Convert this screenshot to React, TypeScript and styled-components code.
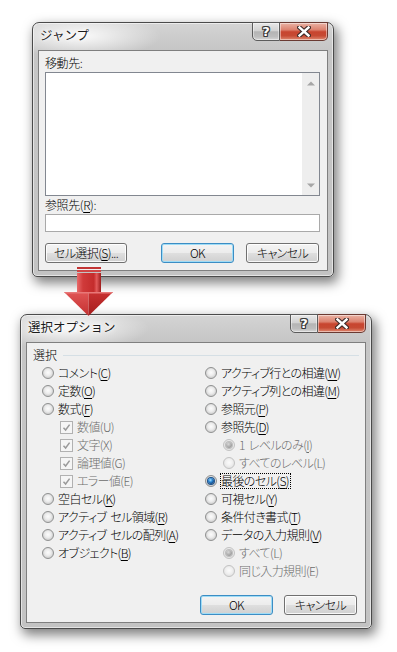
import React from "react";
import styled, { createGlobalStyle } from "styled-components";

const GlobalStyle = createGlobalStyle`
  html, body { margin: 0; padding: 0; background: #ffffff; }
  body { font-family: "Noto Sans CJK JP", "Noto Sans", sans-serif; }
  #root { width: 397px; height: 652px; }
`;

const FONT = `"Noto Sans CJK JP", "Noto Sans", sans-serif`;

const Page = styled.div`
  position: relative;
  width: 397px;
  height: 652px;
  overflow: hidden;
  display: flex;
  flex-direction: column;
  align-items: flex-start;
  padding-top: 22px;
  box-sizing: border-box;
  font-family: ${FONT};
`;

const Window = styled.div<{ $w: number; $h: number; $ml: number; $mt: number }>`
  width: ${(p) => p.$w}px;
  height: ${(p) => p.$h}px;
  margin-left: ${(p) => p.$ml}px;
  margin-top: ${(p) => p.$mt}px;
  flex-shrink: 0;
  box-sizing: border-box;
  border: 1px solid #4a4a4a;
  border-radius: 7px 7px 5px 5px;
  background:
    radial-gradient(ellipse 80px 22px at 48px 13px, rgba(255, 255, 255, 0.9), rgba(255, 255, 255, 0) 100%),
    linear-gradient(180deg, #d4d4d4 0px, #c6c6c6 26px, #c3c3c3 100%);
  box-shadow: inset 0 0 0 1px rgba(255, 255, 255, 0.55), 3px 5px 12px 1px rgba(0, 0, 0, 0.5);
  display: flex;
  flex-direction: column;
  padding: 0 5px 5px 5px;
`;

const TitleBar = styled.div`
  height: 27px;
  flex-shrink: 0;
  display: flex;
  align-items: flex-start;
`;

const Caption = styled.span`
  font-size: 12.5px;
  font-weight: 400;
  line-height: 16px;
  padding: 4px 0 0 2px;
  color: #1c1c1c;
  text-shadow: 0 0 6px #fff, 0 0 3px #fff, 0 0 1px #fff;
`;

const CaptionButtons = styled.div`
  margin-left: auto;
  margin-top: -1px;
  display: flex;
  height: 19px;
`;

const CapButton = styled.div<{ $kind: "help" | "close" }>`
  width: ${(p) => (p.$kind === "close" ? 48 : 28)}px;
  height: 19px;
  box-sizing: border-box;
  border: 1px solid ${(p) => (p.$kind === "close" ? "#6a3a32" : "#5c5c5c")};
  border-left-width: ${(p) => (p.$kind === "close" ? 0 : 1)}px;
  border-radius: ${(p) => (p.$kind === "close" ? "0 0 5px 0" : "0 0 0 5px")};
  background: ${(p) =>
    p.$kind === "close"
      ? "linear-gradient(180deg, #eab3a5 0%, #dc826f 40%, #c8452f 52%, #c64a33 75%, #e08a72 100%)"
      : "linear-gradient(180deg, #e8e8e8 0%, #d2d2d2 45%, #b4b4b4 52%, #bdbdbd 80%, #d6d6d6 100%)"};
  box-shadow: inset 0 0 0 1px rgba(255, 255, 255, 0.45);
  display: flex;
  align-items: center;
  justify-content: center;
`;

const HelpGlyph = styled.span`
  font-family: "DejaVu Sans", sans-serif;
  font-weight: bold;
  font-size: 13px;
  line-height: 13px;
  color: #fff;
  text-shadow: 1px 0 #3a3a3a, -1px 0 #3a3a3a, 0 1px #3a3a3a, 0 -1px #3a3a3a, 1px 1px #3a3a3a,
    -1px -1px #3a3a3a, 1px -1px #3a3a3a, -1px 1px #3a3a3a;
`;

const Client = styled.div`
  flex: 1;
  min-height: 0;
  border: 1px solid #7f7f7f;
  background: #f0f0f0;
  display: flex;
  flex-direction: column;
  font-size: 12px;
  font-weight: 300;
  color: #000;
`;

const FieldLabel = styled.div<{ $top: number }>`
  margin: ${(p) => p.$top}px 0 0 6px;
  line-height: 16px;
  height: 16px;
  font-size: 12px;
  letter-spacing: -0.4px;
  white-space: nowrap;
`;

const ListBox = styled.div`
  height: 124px;
  margin: 1px 7px 0 6px;
  box-sizing: border-box;
  border: 1px solid #828790;
  background: #fff;
  display: flex;
  justify-content: flex-end;
`;

const ScrollBar = styled.div`
  width: 17px;
  background: #eeeeee;
  display: flex;
  flex-direction: column;
  justify-content: space-between;
  align-items: center;
  padding: 8px 0 7px;
  box-sizing: border-box;
`;

const TextBox = styled.div`
  height: 18px;
  margin: 1px 7px 0 6px;
  box-sizing: border-box;
  border: 1px solid #a9a9a9;
  background: #fff;
`;

const ButtonRow = styled.div<{ $top: number; $spread?: boolean }>`
  margin-top: ${(p) => p.$top}px;
  display: flex;
  align-items: center;
  justify-content: ${(p) => (p.$spread ? "space-between" : "flex-end")};
  gap: 11px;
  padding: 0 8px 0 6px;
`;

const ButtonPair = styled.div`
  display: flex;
  gap: 12px;
`;

const PushButton = styled.div<{ $w: number; $default?: boolean }>`
  width: ${(p) => p.$w}px;
  height: 20px;
  box-sizing: border-box;
  border: 1px solid ${(p) => (p.$default ? "#3c8dc4" : "#707070")};
  border-radius: 3px;
  background: linear-gradient(180deg, #f4f4f4 0%, #ececec 48%, #dedede 52%, #d0d0d0 100%);
  box-shadow: inset 0 0 0 1px ${(p) => (p.$default ? "#9fdcf6" : "rgba(255,255,255,0.85)")};
  font-size: 12px;
  line-height: 18px;
  text-align: center;
  font-feature-settings: "palt";
  letter-spacing: -0.6px;
  white-space: nowrap;
  color: #000;
`;

const GroupHeader = styled.div`
  display: flex;
  align-items: center;
  gap: 6px;
  padding: 4px 6px 0 6px;
  height: 16px;
  line-height: 16px;
  &::after {
    content: "";
    flex: 1;
    height: 1px;
    background: #d5dfe5;
  }
`;

const OptionGrid = styled.div`
  margin-top: 1px;
  display: grid;
  grid-template-columns: 163px 1fr;
  padding-left: 15px;
`;

const Column = styled.div`
  display: flex;
  flex-direction: column;
`;

const OptionRow = styled.div<{ $indent?: boolean; $disabled?: boolean }>`
  height: 18px;
  display: flex;
  align-items: center;
  gap: 3px;
  padding-left: ${(p) => (p.$indent ? 18 : 0)}px;
  color: ${(p) => (p.$disabled ? "#6d6d6d" : "#000")};
`;

const RadioCircle = styled.span<{ $checked?: boolean; $disabled?: boolean }>`
  width: 12px;
  height: 12px;
  flex-shrink: 0;
  box-sizing: border-box;
  border-radius: 50%;
  border: 1px solid ${(p) => (p.$disabled ? "#c2c2c2" : "#8f9090")};
  background: ${(p) =>
    p.$disabled
      ? "radial-gradient(circle at 50% 45%, #fbfbfb 0px, #f1f1f1 3px, #e6e6e6 5px)"
      : "radial-gradient(circle at 50% 45%, #fcfcfc 0px, #ededed 3px, #d5d5d5 5px)"};
  display: inline-flex;
  align-items: center;
  justify-content: center;
  &::after {
    content: "";
    display: ${(p) => (p.$checked ? "block" : "none")};
    width: 6px;
    height: 6px;
    border-radius: 50%;
    background: ${(p) =>
      p.$disabled
        ? "radial-gradient(circle at 40% 35%, #d8d8d8, #9c9c9c 70%)"
        : "radial-gradient(circle at 40% 35%, #a6e1ff 0px, #2b86d3 2px, #0b3e78 4px)"};
    box-shadow: ${(p) => (p.$disabled ? "0 0 0 1px #bdbdbd" : "0 0 0 1px #1a4f88")};
  }
`;

const CheckBoxBox = styled.span`
  width: 13px;
  height: 13px;
  flex-shrink: 0;
  box-sizing: border-box;
  border: 1px solid #b1b1b1;
  background: #f5f5f5;
  display: inline-flex;
  align-items: center;
  justify-content: center;
`;

const LabelText = styled.span<{ $focus?: boolean }>`
  border: 1px ${(p) => (p.$focus ? "dotted #000" : "solid transparent")};
  padding-right: 1px;
  line-height: 14px;
  white-space: nowrap;
  font-size: 12px;
  font-feature-settings: "palt";
  letter-spacing: -0.6px;
`;

const WordGap = styled.span`
  display: inline-block;
  width: 4px;
`;

const Key = styled.span<{ $show: boolean }>`
  text-decoration: ${(p) => (p.$show ? "underline" : "none")};
  text-underline-offset: 2px;
`;

const Arrow = styled.svg`
  position: absolute;
  left: 62px;
  top: 264px;
  width: 54px;
  height: 54px;
  overflow: visible;
`;

function spaced(text: string) {
  const parts = text.split(" ");
  return parts.map((part, i) => (
    <React.Fragment key={i}>
      {i > 0 && <WordGap />}
      {part}
    </React.Fragment>
  ));
}

function withKey(label: string, key: string | undefined, show: boolean) {
  if (!key) return spaced(label);
  const token = `(${key})`;
  const i = label.lastIndexOf(token);
  if (i < 0) return spaced(label);
  return (
    <>
      {spaced(label.slice(0, i + 1))}
      <Key $show={show}>{key}</Key>
      {label.slice(i + 2)}
    </>
  );
}

type Opt = {
  kind: "radio" | "check";
  label: string;
  k?: string;
  indent?: boolean;
  disabled?: boolean;
  checked?: boolean;
  focus?: boolean;
  underline?: boolean;
};

const leftOpts: Opt[] = [
  { kind: "radio", label: "コメント(C)", k: "C" },
  { kind: "radio", label: "定数(O)", k: "O" },
  { kind: "radio", label: "数式(F)", k: "F" },
  { kind: "check", label: "数値(U)", k: "U", indent: true, disabled: true, checked: true },
  { kind: "check", label: "文字(X)", k: "X", indent: true, disabled: true, checked: true },
  { kind: "check", label: "論理値(G)", k: "G", indent: true, disabled: true, checked: true },
  { kind: "check", label: "エラー値(E)", k: "E", indent: true, disabled: true, checked: true },
  { kind: "radio", label: "空白セル(K)", k: "K" },
  { kind: "radio", label: "アクティブ セル領域(R)", k: "R" },
  { kind: "radio", label: "アクティブ セルの配列(A)", k: "A" },
  { kind: "radio", label: "オブジェクト(B)", k: "B" },
];

const rightOpts: Opt[] = [
  { kind: "radio", label: "アクティブ行との相違(W)", k: "W" },
  { kind: "radio", label: "アクティブ列との相違(M)", k: "M" },
  { kind: "radio", label: "参照元(P)", k: "P" },
  { kind: "radio", label: "参照先(D)", k: "D" },
  { kind: "radio", label: "1 レベルのみ(I)", k: "I", indent: true, disabled: true, checked: true, underline: true },
  { kind: "radio", label: "すべてのレベル(L)", k: "L", indent: true, disabled: true },
  { kind: "radio", label: "最後のセル(S)", k: "S", checked: true, focus: true },
  { kind: "radio", label: "可視セル(Y)", k: "Y" },
  { kind: "radio", label: "条件付き書式(T)", k: "T" },
  { kind: "radio", label: "データの入力規則(V)", k: "V" },
  { kind: "radio", label: "すべて(L)", k: "L", indent: true, disabled: true, checked: true },
  { kind: "radio", label: "同じ入力規則(E)", k: "E", indent: true, disabled: true },
];

function Option({ o }: { o: Opt }) {
  const show = o.underline ?? !o.disabled;
  return (
    <OptionRow $indent={o.indent} $disabled={o.disabled}>
      {o.kind === "radio" ? (
        <RadioCircle $checked={o.checked} $disabled={o.disabled} />
      ) : (
        <CheckBoxBox>
          <svg width="9" height="9" viewBox="0 0 9 9">
            <path d="M1.5 4.8 L3.6 7 L7.6 1.6" fill="none" stroke="#9a9a9a" strokeWidth="1.5" />
          </svg>
        </CheckBoxBox>
      )}
      <LabelText $focus={o.focus}>{withKey(o.label, o.k, show)}</LabelText>
    </OptionRow>
  );
}

function TitleButtons() {
  return (
    <CaptionButtons>
      <CapButton $kind="help">
        <HelpGlyph>?</HelpGlyph>
      </CapButton>
      <CapButton $kind="close">
        <svg width="14" height="11" viewBox="0 0 14 11">
          <path d="M2.5 1.5 L11.5 9.5 M11.5 1.5 L2.5 9.5" stroke="#3b2a28" strokeWidth="4.6" strokeLinecap="square" />
          <path d="M2.5 1.5 L11.5 9.5 M11.5 1.5 L2.5 9.5" stroke="#ffffff" strokeWidth="2.4" strokeLinecap="square" />
        </svg>
      </CapButton>
    </CaptionButtons>
  );
}

export default function App() {
  return (
    <Page>
      <GlobalStyle />
      <Window $w={302} $h={255} $ml={32} $mt={0}>
        <TitleBar>
          <Caption>ジャンプ</Caption>
          <TitleButtons />
        </TitleBar>
        <Client>
          <FieldLabel $top={4}>移動先:</FieldLabel>
          <ListBox>
            <ScrollBar>
              <svg width="8" height="5" viewBox="0 0 8 5">
                <path d="M0 4.5 L4 0.5 L8 4.5 Z" fill="#a6a6a6" />
              </svg>
              <svg width="8" height="5" viewBox="0 0 8 5">
                <path d="M0 0.5 L4 4.5 L8 0.5 Z" fill="#a6a6a6" />
              </svg>
            </ScrollBar>
          </ListBox>
          <FieldLabel $top={1}>
            参照先(<Key $show>R</Key>):
          </FieldLabel>
          <TextBox />
          <ButtonRow $top={11} $spread>
            <PushButton $w={82}>
              セル選択(<Key $show>S</Key>)...
            </PushButton>
            <ButtonPair>
              <PushButton $w={73} $default>
                OK
              </PushButton>
              <PushButton $w={73}>キャンセル</PushButton>
            </ButtonPair>
          </ButtonRow>
        </Client>
      </Window>

      <Window $w={352} $h={315} $ml={20} $mt={37}>
        <TitleBar>
          <Caption>選択オプション</Caption>
          <TitleButtons />
        </TitleBar>
        <Client>
          <GroupHeader>選択</GroupHeader>
          <OptionGrid>
            <Column>
              {leftOpts.map((o, i) => (
                <Option key={i} o={o} />
              ))}
            </Column>
            <Column>
              {rightOpts.map((o, i) => (
                <Option key={i} o={o} />
              ))}
            </Column>
          </OptionGrid>
          <ButtonRow $top={15}>
            <PushButton $w={73} $default>
              OK
            </PushButton>
            <PushButton $w={73}>キャンセル</PushButton>
          </ButtonRow>
        </Client>
      </Window>

      <Arrow viewBox="0 0 54 54">
        <defs>
          <linearGradient id="shaft" x1="0" y1="0" x2="1" y2="0">
            <stop offset="0" stopColor="#e86a6a" />
            <stop offset="0.25" stopColor="#d03a3a" />
            <stop offset="0.7" stopColor="#c42c2c" />
            <stop offset="0.82" stopColor="#e25a5a" />
            <stop offset="1" stopColor="#9c1a1a" />
          </linearGradient>
          <linearGradient id="headL" x1="0" y1="0" x2="0" y2="1">
            <stop offset="0" stopColor="#e05555" />
            <stop offset="1" stopColor="#c43030" />
          </linearGradient>
          <linearGradient id="headR" x1="0" y1="0" x2="0" y2="1">
            <stop offset="0" stopColor="#c83232" />
            <stop offset="1" stopColor="#a51c1c" />
          </linearGradient>
        </defs>
        <rect x="15" y="3" width="24" height="2" fill="#c23333" />
        <rect x="15" y="6" width="24" height="2" fill="#d14545" />
        <rect x="15" y="9" width="24" height="20" fill="url(#shaft)" />
        <polygon points="2,28 26.5,28 26.5,52" fill="url(#headL)" />
        <polygon points="26.5,28 51,28 26.5,52" fill="url(#headR)" />
        <polygon points="2,28 51,28 49,29.5 4,29.5" fill="#e87878" />
      </Arrow>
    </Page>
  );
}
